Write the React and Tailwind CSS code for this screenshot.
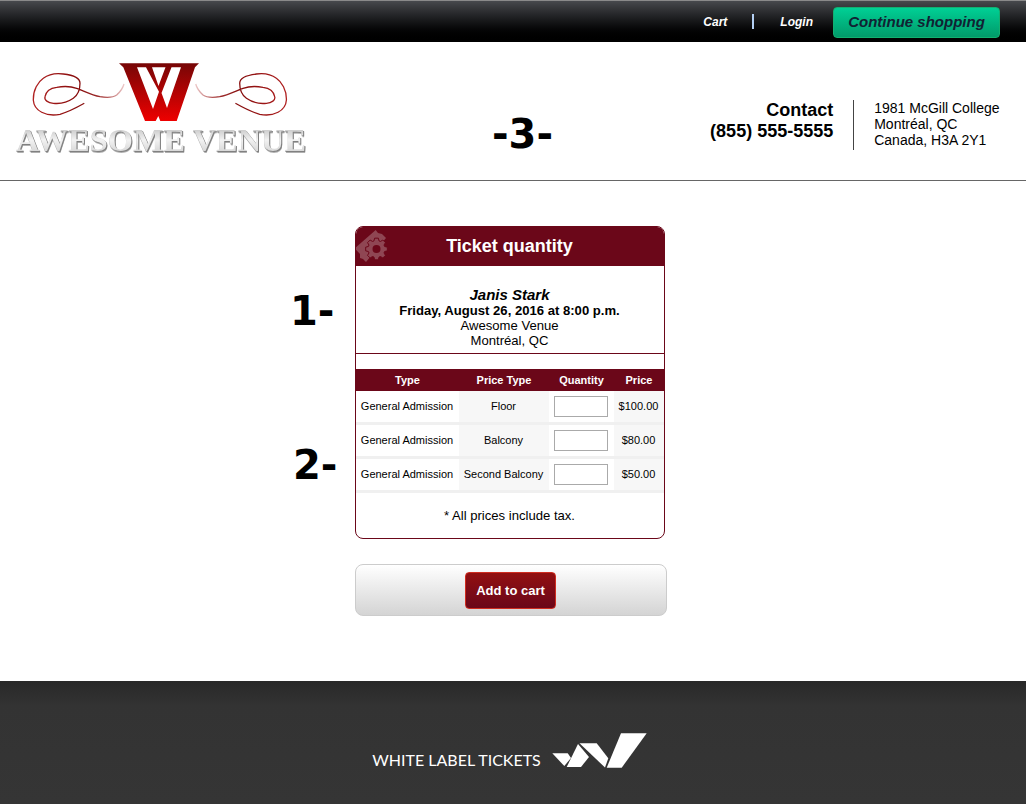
import React from 'react';

const ROWS = [
  { type: 'General Admission', priceType: 'Floor', price: '$100.00' },
  { type: 'General Admission', priceType: 'Balcony', price: '$80.00' },
  { type: 'General Admission', priceType: 'Second Balcony', price: '$50.00' },
];

const SWIRL = 'M68.3 40.3C60 45 52 49 44 51.3C30 54 18 48 17.3 37C17 27 22 19 27.3 15.3C33 11 40 10 47.3 11C56 12 64 15 64 20.3C64 27 62 32 57.3 35.3C52 39 44 41 37.3 40.3C32 40 28 37 29 33.7C30 28 35 25 40.7 24.3C48 23 54 23 60.7 25.3C68 28 76 32 84 33.7C92 35 98 34 100.7 32C104 29 107 25 108 21';

// eight toothed gear around (cx, cy)
function gearPath(cx, cy, outer, inner) {
  const pts = [];
  for (let i = 0; i < 8; i++) {
    const a = (i * Math.PI) / 4;
    [[-0.3, inner], [-0.17, outer], [0.17, outer], [0.3, inner]].forEach(([d, r]) => {
      pts.push(`${(cx + r * Math.cos(a + d)).toFixed(2)} ${(cy + r * Math.sin(a + d)).toFixed(2)}`);
    });
  }
  return `M${pts.join('L')}Z`;
}

function VenueLogo() {
  return (
    <div className="w-[300px] flex flex-col items-start">
      <svg width="300" height="60" viewBox="0 0 300 60" className="block">
        <defs>
          <linearGradient id="wRed" x1="0" y1="0" x2="0" y2="1">
            <stop offset="0" stopColor="#760606" />
            <stop offset="1" stopColor="#ee0000" />
          </linearGradient>
          <linearGradient id="swirl" x1="0" y1="0" x2="1" y2="0">
            <stop offset="0" stopColor="#b02020" />
            <stop offset="0.5" stopColor="#860c0c" />
            <stop offset="0.75" stopColor="#a03030" />
            <stop offset="1" stopColor="#ecc8c8" />
          </linearGradient>
        </defs>
        <path d="M103 0.3H183L179 4.3L160.7 58H144.3L142.3 53L139.7 58H129L107.3 4.3Z" fill="url(#wRed)" />
        <path d="M121 4.3H130L143 28.7L137 46Z M136 4.3H149.5L142.5 23Z M155.5 4.3H165L151 45L145.5 30Z" fill="#fff" />
        <path d={SWIRL} fill="none" stroke="url(#swirl)" strokeWidth="1.3" />
        <path d={SWIRL} fill="none" stroke="url(#swirl)" strokeWidth="1.3" transform="translate(287.7 0) scale(-1 1)" />
      </svg>
      <div className="mt-[2px] font-['Liberation_Serif',serif] font-bold text-[32.4px] leading-[30px] whitespace-nowrap text-transparent bg-clip-text bg-gradient-to-b from-[#bcbcbc] via-[#f2f2f2] to-[#d0d0d0] [filter:drop-shadow(1px_1px_0_#808080)_drop-shadow(0_1px_0_#b0b0b0)]">
        AWESOME VENUE
      </div>
    </div>
  );
}

function TicketIcon() {
  return (
    <svg width="36" height="38" viewBox="0 0 36 38" className="absolute left-0 top-0">
      <path d="M-0.3 22.3L20.7 4L23 7L27 8L31 12L11 36L8 33L5 32L5 28Z" fill="#8f4653" />
      <path d={gearPath(21.5, 23, 11, 8.5)} fill="#8f4653" stroke="#6b0719" strokeWidth="1" />
      <circle cx="21.5" cy="23" r="4" fill="#6b0719" />
    </svg>
  );
}

function WltMark() {
  return (
    <svg width="95" height="35" viewBox="0 0 95 35" className="block" fill="#fff">
      <path d="M0.3 20.3H15.7L19 25L12.3 33Z" />
      <path d="M14.7 34L26 11L37 24L29 34Z" />
      <path d="M27.5 10.3H44.7L56.3 25.3L53 34.5Z" />
      <path d="M54.7 34.7L69 0.3H94.7L69.7 34.7Z" />
    </svg>
  );
}

export default function App() {
  return (
    <div className="w-full min-h-[804px] flex flex-col bg-white font-['Liberation_Sans',Arial,sans-serif] text-black">
      {/* Top bar */}
      <div className="h-[42px] flex items-center justify-end border-t border-[#8a8a8a] bg-gradient-to-b from-[#47494d] to-black pr-[26px]">
        <span className="text-white italic font-bold text-[12px]">Cart</span>
        <span className="w-[2px] h-[15px] bg-[#b4d0f4] ml-[25px] mr-[26px]" />
        <span className="text-white italic font-bold text-[12px]">Login</span>
        <span className="ml-[20px] mt-[1px] h-[31px] w-[167px] flex items-center justify-center rounded-[4px] border border-[#12b070] bg-gradient-to-b from-[#00d095] to-[#019a6a] text-[#123] italic font-bold text-[15px]">
          Continue shopping
        </span>
      </div>

      {/* Venue header */}
      <header className="h-[139px] relative flex items-start justify-between border-b border-[#666]">
        <div className="pl-[16px] pt-[21px]">
          <VenueLogo />
        </div>
        <div className="absolute left-[492px] top-[62px] font-['DejaVu_Sans',sans-serif] font-bold text-[40px] leading-[60px]">-3-</div>
        <div className="flex items-start pt-[58px] pr-[26.5px]">
          <div className="text-right font-bold text-[18px] leading-[21px] pr-[19.5px]">
            <div>Contact</div>
            <div>(855) 555-5555</div>
          </div>
          <div className="h-[50px] border-l border-[#444] pl-[20.5px] text-[14px] leading-[16px]">
            <div>1981 McGill College</div>
            <div>Montréal, QC</div>
            <div>Canada, H3A 2Y1</div>
          </div>
        </div>
      </header>

      {/* Main */}
      <main className="h-[500px] flex flex-col items-center pt-[45px] pr-[4px]">
        <div className="relative w-[312px]">
          <div className="absolute left-[-65px] top-[55px] font-['DejaVu_Sans',sans-serif] font-bold text-[40px] leading-[60px]">1-</div>
          <div className="absolute left-[-62px] top-[209px] font-['DejaVu_Sans',sans-serif] font-bold text-[40px] leading-[60px]">2-</div>

          <div className="w-[310px] h-[313px] rounded-[8px] border border-[#6b0719] overflow-hidden flex flex-col">
            <div className="relative h-[40px] pr-px bg-[#6b0719] flex items-center justify-center text-white font-bold text-[18px] -mx-px -mt-px shrink-0">
              <TicketIcon />
              Ticket quantity
            </div>
            <div className="h-[88px] pr-px border-b border-[#6b0719] flex flex-col items-center pt-[21px] text-[13.1px] leading-[15px] shrink-0">
              <div className="italic font-bold text-[15px] leading-[16px]">Janis Stark</div>
              <div className="font-bold">Friday, August 26, 2016 at 8:00 p.m.</div>
              <div>Awesome Venue</div>
              <div>Montréal, QC</div>
            </div>
            <div className="h-[15px] shrink-0" />
            <div className="grid grid-cols-[103px_90px_65px_50px] h-[22px] bg-[#6b0719] text-white font-bold text-[11px] items-center text-center shrink-0">
              <div>Type</div>
              <div>Price Type</div>
              <div>Quantity</div>
              <div>Price</div>
            </div>
            {ROWS.map(row => (
              <div key={row.priceType} className="grid grid-cols-[103px_90px_65px_50px] h-[34px] border-b-[3px] border-[#f0f0f0] text-[11px] text-center shrink-0">
                <div className="flex items-center justify-center pr-px">{row.type}</div>
                <div className="flex items-center justify-center pr-px bg-[#f7f7f7] whitespace-nowrap">{row.priceType}</div>
                <div className="flex items-center justify-center pr-px">
                  <input className="w-[54px] h-[21px] border border-[#aaa] bg-white" />
                </div>
                <div className="flex items-center justify-center pr-px bg-[#f7f7f7]">{row.price}</div>
              </div>
            ))}
            <div className="flex-1 flex items-center justify-center pr-px text-[13.1px]">* All prices include tax.</div>
          </div>

          <div className="mt-[25px] w-[312px] h-[52px] pr-px rounded-[8px] border border-[#ccc] bg-gradient-to-b from-white to-[#d4d4d4] flex items-center justify-center">
            <button className="w-[91px] h-[37px] pt-px rounded-[4px] border border-[#d02c20] bg-gradient-to-b from-[#921010] to-[#6b0719] text-white font-bold text-[13px]">
              Add to cart
            </button>
          </div>
        </div>
      </main>

      {/* Footer */}
      <footer className="h-[123px] bg-gradient-to-b from-[#282828] via-[#333] via-[20%] to-[#353535] flex items-start justify-center pt-[52px] pr-[7px]">
        <div className="flex items-end gap-[11px]">
          <span className="font-['Lato',sans-serif] text-white text-[16px] leading-[24px] mb-[-4px] whitespace-nowrap">WHITE LABEL TICKETS</span>
          <WltMark />
        </div>
      </footer>
    </div>
  );
}
